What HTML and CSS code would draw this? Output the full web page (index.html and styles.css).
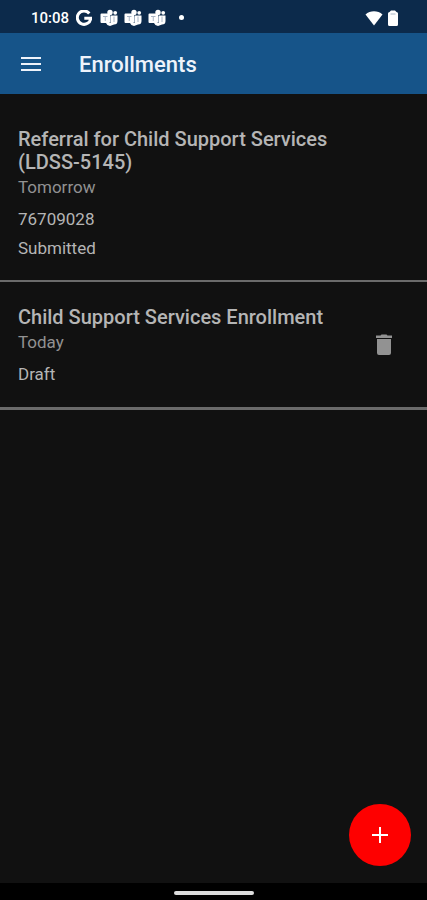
FILE: index.html
```html
<!DOCTYPE html>
<html lang="en">
<head>
  <meta charset="utf-8">
  <meta name="viewport" content="width=device-width, initial-scale=1">
  <title>Enrollments</title>
  <link rel="stylesheet" href="styles.css">
</head>
<body>
  <svg width="0" height="0" class="symbols" aria-hidden="true">
    <symbol id="teams" viewBox="0 0 18 18">
      <circle cx="10" cy="3.5" r="2.700"/>
      <circle cx="15.2" cy="3.8" r="1.900"/>
      <path d="M10.500 6.500H17.500V12a3.500 3.500 0 0 1-3.500 3.500L10 17a4.500 4.500 0 0 1-4-3h4.500z"/>
      <path d="M1.500 4.500H9a1 1 0 0 1 1 1V13a1 1 0 0 1-1 1H1.500a1 1 0 0 1-1-1V5.500a1 1 0 0 1 1-1z"/>
      <path class="cut" d="M3 7.500H7.500M5.250 7.500V12M10.500 7.500V13M14 7.500V13"/>
    </symbol>
  </svg>
  <div class="screen">
    <div class="status">
      <span class="time">10:08</span>
      <svg class="google" viewBox="0 0 16 16" aria-hidden="true"><path d="M13.300 3.500A6.700 6.700 0 1 0 14.700 8.300H8.300"/></svg>
      <svg class="teams" aria-hidden="true"><use href="#teams"/></svg>
      <svg class="teams" aria-hidden="true"><use href="#teams"/></svg>
      <svg class="teams" aria-hidden="true"><use href="#teams"/></svg>
      <span class="dot"></span>
      <svg class="wifi" viewBox="0 0 18 16" aria-hidden="true"><path d="M.5 4.500C5 .2 13 .2 17.500 4.500L9 15.500z"/></svg>
      <svg class="battery" viewBox="0 0 10 16" aria-hidden="true"><path d="M3 .5h4L8.500 2A1.500 1.500 0 0 1 10 3.500v11A1.500 1.500 0 0 1 8.500 16h-7A1.500 1.500 0 0 1 0 14.500v-11A1.500 1.500 0 0 1 1.500 2z"/><path class="cut" d="M2.500 4h5"/></svg>
    </div>
    <header class="appbar">
      <button class="menu" type="button" aria-label="Menu">
        <svg viewBox="0 0 20 16" aria-hidden="true"><path d="M0 2h20M0 8h20M0 14h20"/></svg>
      </button>
      <h1>Enrollments</h1>
    </header>
    <main>
      <ul class="list">
        <li class="item">
          <div class="info">
            <h2>Referral for Child Support Services (LDSS-5145)</h2>
            <p class="date">Tomorrow</p>
            <p class="detail">76709028</p>
            <p class="detail">Submitted</p>
          </div>
        </li>
        <li class="item">
          <div class="info">
            <h2>Child Support Services Enrollment</h2>
            <p class="date">Today</p>
            <p class="detail">Draft</p>
          </div>
          <button class="delete" type="button" aria-label="Delete">
            <svg viewBox="0 0 16 22" aria-hidden="true"><path d="M0 1.500H4.500L5.500.5h5l1 1H16V4H0zM1 5H15V19a2 2 0 0 1-2 2H3a2 2 0 0 1-2-2z"/></svg>
          </button>
        </li>
      </ul>
    </main>
    <button class="add" type="button" aria-label="Add enrollment">
      <svg viewBox="0 0 16 16" aria-hidden="true"><path d="M8 0v16M0 8h16"/></svg>
    </button>
    <div class="navbar"><span></span></div>
  </div>
</body>
</html>
```
FILE: styles.css
```css
* {
  box-sizing: border-box;
}

body {
  margin: 0;
  background: #111;
  color: #b5b5b5;
  font-family: Roboto, "Liberation Sans", sans-serif;
}

h1, h2, p, ul {
  margin: 0;
  padding: 0;
}

button {
  display: flex;
  align-items: center;
  justify-content: center;
  padding: 0;
  border: 0;
  background: none;
  color: inherit;
}

svg {
  display: block;
  fill: currentColor;
}

.symbols {
  position: absolute;
}

.screen {
  display: flex;
  flex-direction: column;
  min-height: 100vh;
}

.status {
  display: flex;
  align-items: center;
  height: 33px;
  padding: 2px 29px 0 31px;
  background: #0c2a4b;
  color: #fff;
}

.time {
  margin-right: 7px;
  font-size: 15px;
  font-weight: 500;
}

.google {
  width: 16px;
  height: 16px;
  margin-right: 8px;
  fill: none;
  stroke: currentColor;
  stroke-width: 3;
}

.teams {
  width: 18px;
  height: 18px;
  margin-right: 6px;
}

.cut {
  fill: none;
  stroke: #a9b6c6;
  stroke-width: 1;
}

.dot {
  width: 5px;
  height: 5px;
  margin: 0 auto 0 7px;
  border-radius: 50%;
  background: #fff;
}

.wifi {
  width: 18px;
  height: 16px;
  margin-right: 5px;
}

.battery {
  width: 10px;
  height: 16px;
}

.appbar {
  display: flex;
  align-items: center;
  height: 61px;
  padding: 1px 11px 0;
  background: #165489;
  color: #eef3fb;
}

.menu {
  width: 40px;
  height: 40px;
  margin-right: 28px;
}

.menu svg {
  width: 20px;
  height: 16px;
  stroke: currentColor;
  stroke-width: 2;
}

h1 {
  font-size: 22px;
  font-weight: 500;
}

main {
  flex: 1;
}

.list {
  list-style: none;
}

.item {
  display: flex;
  align-items: center;
  padding: 24px 23px 17px 18px;
  border-bottom: 2px solid #6b6b6b;
}

.item:first-child {
  padding-top: 34px;
  padding-right: 63px;
}

.item:last-child {
  padding-bottom: 18px;
  border-bottom-width: 3px;
}

.info {
  flex: 1;
}

h2 {
  font-size: 20px;
  font-weight: 500;
  line-height: 23px;
}

.date {
  margin-bottom: 5px;
  color: #929292;
  font-size: 17px;
  line-height: 26px;
}

.detail {
  font-size: 17px;
  line-height: 29px;
}

.delete {
  width: 40px;
  height: 40px;
  margin-bottom: 6px;
  color: #929292;
}

.delete svg {
  width: 16px;
  height: 22px;
}

.add {
  align-self: flex-end;
  width: 62px;
  height: 62px;
  margin: 0 16px 17px;
  border-radius: 50%;
  background: #fe0000;
  color: #fff;
}

.add svg {
  width: 16px;
  height: 16px;
  stroke: currentColor;
  stroke-width: 2;
}

.navbar {
  display: flex;
  align-items: center;
  justify-content: center;
  height: 17px;
  background: #000;
}

.navbar span {
  width: 80px;
  height: 4px;
  margin-top: 2px;
  border-radius: 2px;
  background: #ddd;
}
```
